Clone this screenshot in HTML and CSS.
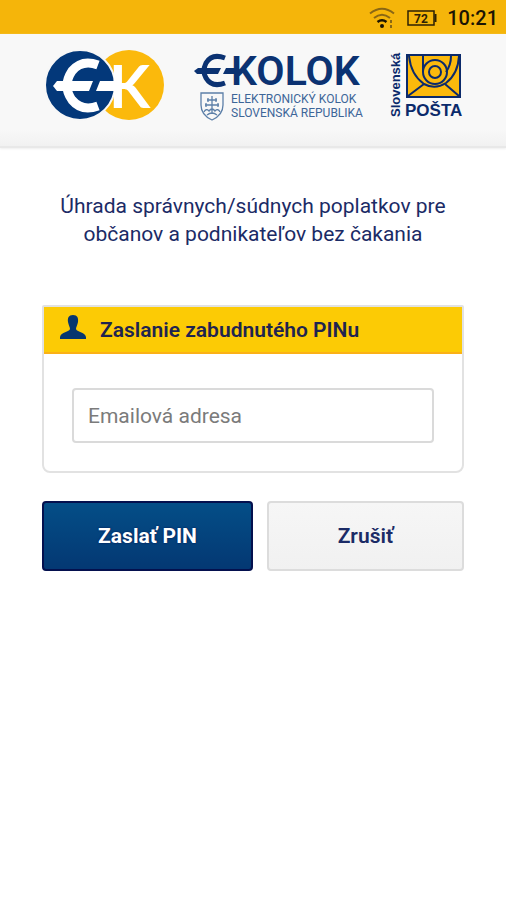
FILE: index.html
```html
<!DOCTYPE html>
<html lang="sk">
<head>
    <meta charset="UTF-8">
    <meta name="viewport" content="width=device-width, initial-scale=1.0">
    <title>eKolok - Zaslanie zabudnutého PINu</title>
    <link rel="stylesheet" href="styles.css">
</head>
<body>
    <div class="status-bar">
        <svg class="wifi" width="26" height="22" viewBox="0 0 26 22" aria-hidden="true">
            <g fill="none" stroke="#8a6714" stroke-width="2">
                <path d="M1 6.500Q13 -3 25 6.500"/>
                <path d="M5 11Q13 4.500 21 11"/>
            </g>
            <path d="M8.500 15Q13 11.500 17.500 15" fill="none" stroke="#1c1503" stroke-width="2.500"/>
            <circle cx="13" cy="19" r="2" fill="#1c1503"/>
            <path d="M22 13v3M22 18v3" stroke="#8a6714" stroke-width="2"/>
        </svg>
        <svg class="battery" width="30" height="18" viewBox="0 0 30 18" role="img" aria-label="72 %">
            <rect x="1" y="2" width="26" height="14" fill="none" stroke="#2c2105" stroke-width="1.500"/>
            <path d="M28.500 5v8" stroke="#2c2105" stroke-width="2"/>
            <text x="14" y="13.500" text-anchor="middle" class="battery-text">72</text>
        </svg>
        <span class="clock">10:21</span>
    </div>

    <header class="header">
        <!-- Znak EK -->
        <svg width="120" height="72" viewBox="0 0 120 72" role="img" aria-label="EK">
            <circle cx="85" cy="35" r="35" fill="#fbb90c"/>
            <circle cx="36" cy="35" r="35" fill="#03387a" stroke="#f7f7f7" stroke-width="2"/>
            <path d="M54 15Q38 9 28 21Q18 36 28 50Q38 62 54 56" fill="none" stroke="#fff" stroke-width="9"/>
            <path d="M9 36l4 -5h36l-4 10H13z" fill="#fff"/>
            <path d="M52 41l4 -10h16v10z" fill="#fff"/>
            <text x="65" y="58" class="mark-k">K</text>
        </svg>

        <!-- Logo eKolok -->
        <svg width="168" height="72" viewBox="0 0 168 72" role="img" aria-label="eKolok">
            <path d="M32 8Q19 3 13 13Q9 21 13 28Q19 38 32 33" fill="none" stroke="#0b3272" stroke-width="5"/>
            <path d="M1 21l4 -3h23l-3 6H4z" fill="#0b3272"/>
            <path d="M30 24l3 -6h10v6z" fill="#0b3272"/>
            <text x="38" y="35" class="wordmark">KOLOK</text>
            <g fill="none" stroke="#5c7fa8" stroke-width="1.300">
                <path d="M8 43H30V55Q30 65 19 70Q8 65 8 55Z"/>
                <path d="M19 46V64M14 50H24M12 55H26M13 53V57M25 53V57M15 48V52M23 48V52M11 62Q13 58 16 61Q19 57 22 61Q25 58 27 62M14 65Q19 61 24 65"/>
            </g>
            <text x="38" y="53" class="tagline">ELEKTRONICKÝ KOLOK</text>
            <text x="38" y="67" class="tagline">SLOVENSKÁ REPUBLIKA</text>
        </svg>

        <!-- Logo Slovenská pošta -->
        <svg width="73" height="72" viewBox="0 0 73 72" role="img" aria-label="Slovenská pošta">
            <text transform="translate(11 67) rotate(-90)" class="posta-side">Slovenská</text>
            <rect x="18" y="5" width="53" height="42" fill="#fbb90c" stroke="#0b2a6b" stroke-width="2"/>
            <path d="M19 46L35 34M70 46L56 34" stroke="#0b2a6b" stroke-width="2"/>
            <g fill="none" stroke="#0b2a6b" stroke-width="2">
                <path d="M20 6Q22 25 35 34Q46 40 57 33Q69 24 70 6"/>
                <path d="M34 6V22"/>
                <path d="M62 6Q62 15 57 22"/>
                <circle cx="46" cy="22" r="12"/>
                <circle cx="46" cy="22" r="6"/>
            </g>
            <text x="16" y="66" class="posta-name">POŠTA</text>
        </svg>
    </header>

    <main class="content">
        <p class="intro">Úhrada správnych/súdnych poplatkov pre občanov a podnikateľov bez čakania</p>

        <form class="pin-form">
            <section class="card">
                <div class="card-header">
                    <svg width="26" height="24" viewBox="0 0 26 24" aria-hidden="true">
                        <path d="M13 0C17.500 0 18.500 3 18 7C17.500 10 16 12 16 14C16.500 17 25 17 26 22V24H0V22C1 17 9.500 17 10 14C10 12 8.500 10 8 7C7.500 3 8.500 0 13 0Z" fill="#06366f"/>
                    </svg>
                    <h1>Zaslanie zabudnutého PINu</h1>
                </div>
                <div class="card-body">
                    <input type="email" class="email" placeholder="Emailová adresa" aria-label="Emailová adresa">
                </div>
            </section>

            <div class="buttons">
                <button type="submit" class="btn btn-primary">Zaslať PIN</button>
                <button type="button" class="btn btn-secondary">Zrušiť</button>
            </div>
        </form>
    </main>
</body>
</html>
```

FILE: styles.css
```css
* {
    box-sizing: border-box;
}

body {
    margin: 0;
    background: #fff;
    color: #1b2b66;
    font-family: Roboto, "Liberation Sans", sans-serif;
}

.status-bar {
    display: flex;
    align-items: center;
    justify-content: flex-end;
    height: 34px;
    padding: 2px 8px 0;
    background: #f5b50a;
}

.battery {
    margin: 0 10px 0 12px;
}

.battery-text {
    font-size: 12px;
    font-weight: 700;
    fill: #2c2105;
}

.clock {
    color: #1c1503;
    font-size: 20px;
    font-weight: 500;
}

.header {
    display: flex;
    justify-content: space-between;
    padding: 16px 44px 24px;
    background: linear-gradient(#f8f8f8 85%, #f1f1f1);
    border-bottom: 2px solid #e8e8e8;
    box-shadow: 0 1px 2px #eee;
}

.header svg {
    overflow: visible;
}

.mark-k {
    font-family: Lato, sans-serif;
    font-size: 60px;
    font-weight: 700;
    fill: #fff;
}

.wordmark {
    font-size: 41px;
    font-weight: 600;
    fill: #0b3272;
}

.tagline {
    font-size: 12px;
    fill: #3d6698;
}

.posta-side,
.posta-name {
    font-family: "Liberation Sans", Arial, sans-serif;
    font-weight: 700;
    fill: #0b2a6b;
}

.posta-side {
    font-size: 13px;
}

.posta-name {
    font-size: 17px;
}

.content {
    padding: 44px 42px;
}

.intro {
    margin: 0 0 57px;
    font-size: 21px;
    line-height: 28px;
    text-align: center;
}

.card {
    border: 2px solid #e2e2e2;
    border-radius: 2px 2px 8px 8px;
}

.card-header {
    display: flex;
    align-items: center;
    gap: 14px;
    height: 47px;
    padding: 0 16px;
    background: #fccb05;
    border-bottom: 2px solid #fbb116;
}

.card-header svg {
    margin-bottom: 6px;
}

.card-header h1 {
    margin: 0;
    color: #1f2450;
    font-size: 21px;
    font-weight: 600;
}

.card-body {
    padding: 34px 28px 28px;
}

.email {
    display: block;
    width: 100%;
    height: 55px;
    padding: 0 14px;
    background: #fff;
    border: 2px solid #dadada;
    border-radius: 4px;
    color: #333;
    font-family: inherit;
    font-size: 21px;
}

.email::placeholder {
    color: #7b7b7b;
    opacity: 1;
}

.buttons {
    display: grid;
    grid-template-columns: 15fr 14fr;
    gap: 14px;
    margin-top: 28px;
}

.btn {
    height: 70px;
    border-radius: 4px;
    font-family: inherit;
    font-size: 21px;
}

.btn-primary {
    background: linear-gradient(#044e87, #043873);
    border: 2px solid #04104e;
    color: #fff;
    font-weight: 700;
    text-shadow: 0 0 2px #04104e;
}

.btn-secondary {
    background: linear-gradient(#f6f6f6, #f1f1f1);
    border: 2px solid #dcdcdc;
    color: #1b2b66;
    font-weight: 600;
}
```
